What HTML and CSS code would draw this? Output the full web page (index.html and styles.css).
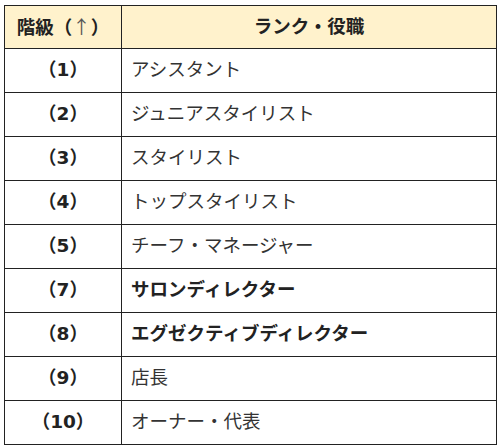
FILE: index.html
```html
<!DOCTYPE html>
<html lang="ja">
<head>
<meta charset="utf-8">
<link rel="stylesheet" href="styles.css">
</head>
<body>
<table class="rank-table">
  <colgroup>
    <col class="col-level">
    <col class="col-rank">
  </colgroup>
  <thead>
    <tr>
      <th>階級（<span class="arrow">↑</span>）</th>
      <th>ランク・役職</th>
    </tr>
  </thead>
  <tbody>
    <tr><td class="num">（1）</td><td class="name">アシスタント</td></tr>
    <tr><td class="num">（2）</td><td class="name">ジュニアスタイリスト</td></tr>
    <tr><td class="num">（3）</td><td class="name">スタイリスト</td></tr>
    <tr><td class="num">（4）</td><td class="name">トップスタイリスト</td></tr>
    <tr><td class="num">（5）</td><td class="name">チーフ・マネージャー</td></tr>
    <tr><td class="num">（7）</td><td class="name strong">サロンディレクター</td></tr>
    <tr><td class="num">（8）</td><td class="name strong">エグゼクティブディレクター</td></tr>
    <tr><td class="num">（9）</td><td class="name">店長</td></tr>
    <tr><td class="num">（10）</td><td class="name">オーナー・代表</td></tr>
  </tbody>
</table>
</body>
</html>
```
FILE: styles.css
```css
html, body {
  margin: 0;
  padding: 0;
  background: #ffffff;
}
body {
  padding: 5px 0 0 4px;
  font-family: "DejaVu Sans", "Noto Sans CJK JP", sans-serif;
  font-size: 18.5px;
  color: #333333;
}
.rank-table {
  border-collapse: collapse;
  width: 493px;
  table-layout: fixed;
}
.col-level {
  width: 117px;
}
.rank-table th,
.rank-table td {
  border: 1px solid #222222;
  padding: 0 9px;
  line-height: 1.2;
}
.rank-table th {
  background: #fff2cc;
  height: 42px;
  font-weight: bold;
  text-align: center;
  color: #222222;
}
.arrow {
  font-family: "Noto Sans CJK JP", sans-serif;
  font-weight: normal;
  color: #555555;
}
.rank-table td {
  height: 43px;
}
.rank-table td.num {
  text-align: center;
  font-weight: bold;
  color: #222222;
  padding: 0;
}
.rank-table td.name {
  text-align: left;
}
.rank-table td.strong {
  font-weight: bold;
  color: #222222;
}
```
